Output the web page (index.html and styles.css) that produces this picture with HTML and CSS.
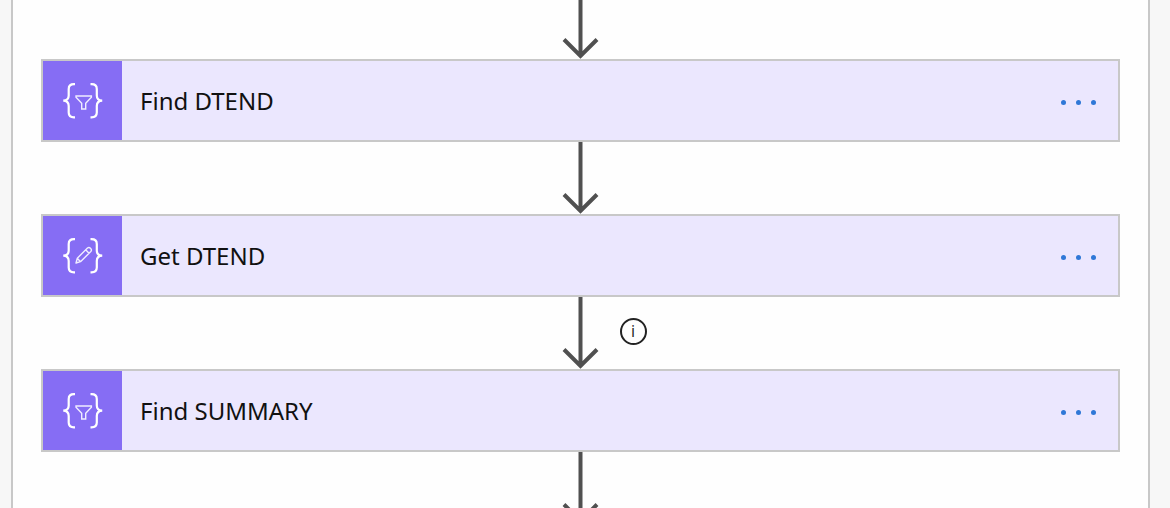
FILE: index.html
```
<!DOCTYPE html>
<html lang="en">
<head>
<meta charset="utf-8">
<title>Flow</title>
<link rel="stylesheet" href="styles.css">
</head>
<body>
<svg class="defs" aria-hidden="true">
  <symbol id="arrow" viewBox="0 0 38 72"><path d="M18.500 0V69M2 52.500L18.500 69L35 52.500" fill="none" stroke="#505050" stroke-width="4"/></symbol>
  <symbol id="braces" viewBox="0 0 40 36"><path d="M12 1.200H11C7 1.200 5.700 3 5.700 6V12.500C5.700 16 4 17.500 .3 17.700C4 17.900 5.700 19.500 5.700 23V29.500C5.700 32.500 7 34.300 11 34.300H12M27.500 1.200H28.500C32.500 1.200 33.800 3 33.800 6V12.500C33.800 16 35.500 17.500 39.200 17.700C35.500 17.900 33.800 19.500 33.800 23V29.500C33.800 32.500 32.500 34.300 28.500 34.300H27.500" fill="none" stroke="#fff" stroke-width="2.200"/></symbol>
  <symbol id="filter" viewBox="0 0 40 36"><use href="#braces"/><path d="M13 13H28.400V14.300L22.700 20.300V26H18.700V20.300L13 14.300Z" fill="none" stroke="#f0edff" stroke-width="1.400"/></symbol>
  <symbol id="compose" viewBox="0 0 40 36"><use href="#braces"/><path d="M13 25L14.300 20.200L24.500 10Q26 8.700 27.500 10.200Q29.200 11.800 27.800 13.500L17.500 23.700ZM14.300 20.200L17.500 23.700M22.700 11.800L26 15.200" fill="none" stroke="#f0edff" stroke-width="1.400" stroke-linejoin="round"/></symbol>
</svg>
<main class="scope">
  <div class="connector connector-first"><svg class="arrow"><use href="#arrow"/></svg></div>
  <section class="card">
    <div class="tile"><svg class="glyph"><use href="#filter"/></svg></div>
    <h2 class="title">Find DTEND</h2>
    <button class="more" aria-label="More options"><span class="dot"></span><span class="dot"></span><span class="dot"></span></button>
  </section>
  <div class="connector"><svg class="arrow"><use href="#arrow"/></svg></div>
  <section class="card">
    <div class="tile"><svg class="glyph"><use href="#compose"/></svg></div>
    <h2 class="title">Get DTEND</h2>
    <button class="more" aria-label="More options"><span class="dot"></span><span class="dot"></span><span class="dot"></span></button>
  </section>
  <div class="connector"><svg class="arrow"><use href="#arrow"/></svg><button class="info" aria-label="Information">i</button></div>
  <section class="card">
    <div class="tile"><svg class="glyph"><use href="#filter"/></svg></div>
    <h2 class="title">Find SUMMARY</h2>
    <button class="more" aria-label="More options"><span class="dot"></span><span class="dot"></span><span class="dot"></span></button>
  </section>
  <div class="connector"><svg class="arrow"><use href="#arrow"/></svg></div>
</main>
</body>
</html>
```
FILE: styles.css
```
* { box-sizing: border-box; }
body {
  display: flex;
  height: 100vh;
  margin: 0;
  padding: 0 20px 0 11px;
  overflow: hidden;
  background: #f7f7f7;
  font-family: "Noto Sans", "Open Sans", sans-serif;
}
.defs { position: absolute; width: 0; height: 0; }
.scope {
  flex: 1;
  align-self: flex-start;
  padding: 0 28px;
  background: #fefefe;
  border: 2px solid #c8c8c8;
  border-width: 0 2px;
}
.connector {
  display: grid;
  grid-template-columns: 1fr 38px 1fr;
  align-items: center;
  height: 72px;
}
.connector-first {
  height: 59px;
  align-content: end;
  overflow: hidden;
}
.arrow {
  grid-column: 2;
  display: block;
  width: 38px;
  height: 72px;
}
.info {
  width: 27px;
  height: 27px;
  margin: 0 0 4px 20px;
  padding: 0;
  border: 2px solid #222;
  border-radius: 50%;
  background: none;
  color: #222;
  font: 16px/22px "Open Sans", sans-serif;
}
.card {
  display: flex;
  align-items: center;
  height: 83px;
  background: #ebe7fe;
  border: 2px solid #c8c8c8;
}
.tile {
  display: flex;
  align-items: center;
  justify-content: center;
  align-self: stretch;
  width: 79px;
  background: #866df4;
}
.glyph { width: 40px; height: 36px; }
.title {
  flex: 1;
  margin: 0;
  padding-left: 18px;
  color: #111;
  font-size: 24px;
  font-weight: 400;
  line-height: 32px;
}
.more {
  display: flex;
  gap: 10px;
  margin-right: 12px;
  padding: 14px 10px 10px;
  border: 0;
  background: none;
}
.dot {
  width: 5px;
  height: 5px;
  border-radius: 50%;
  background: #2f78d7;
}
```
